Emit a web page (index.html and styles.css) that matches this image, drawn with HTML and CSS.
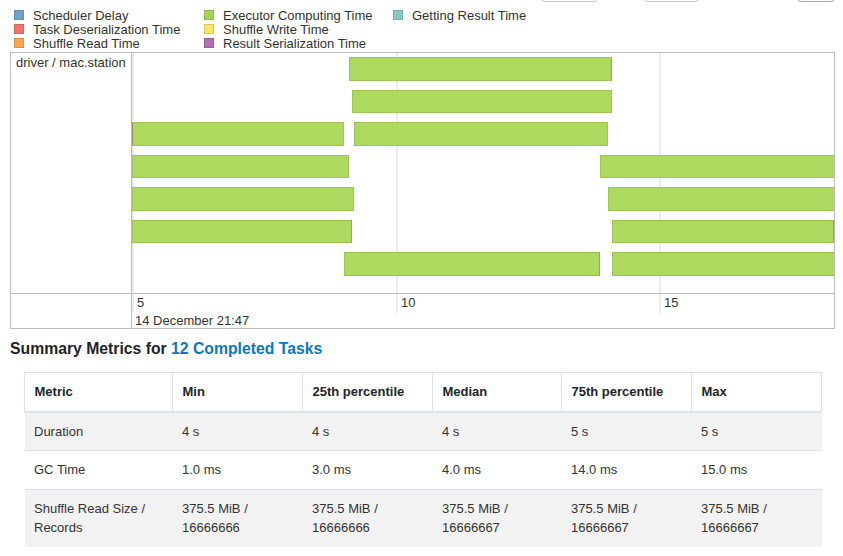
FILE: index.html
```html
<!DOCTYPE html>
<html>
<head>
<meta charset="utf-8">
<link rel="stylesheet" href="styles.css">
</head>
<body>
<div class="topbar">
  <span class="btn btn-a"></span>
  <span class="btn btn-b"></span>
  <span class="btn btn-c"></span>
</div>
<div class="legend">
  <div class="lg-item"><span class="sw sw-sched"></span>Scheduler Delay</div>
  <div class="lg-item"><span class="sw sw-exec"></span>Executor Computing Time</div>
  <div class="lg-item"><span class="sw sw-result"></span>Getting Result Time</div>
  <div class="lg-item"><span class="sw sw-deser"></span>Task Deserialization Time</div>
  <div class="lg-item"><span class="sw sw-write"></span>Shuffle Write Time</div>
  <div class="lg-item"></div>
  <div class="lg-item"><span class="sw sw-read"></span>Shuffle Read Time</div>
  <div class="lg-item"><span class="sw sw-ser"></span>Result Serialization Time</div>
</div>

<div class="timeline">
  <div class="tl-label">driver / mac.station</div>
  <div class="tl-items">
    <span class="grid-line" style="left:0px"></span>
    <span class="grid-line" style="left:264px"></span>
    <span class="grid-line" style="left:527px"></span>
    <div class="tl-rows">
      <div class="tl-row">
        <span class="bar edge-r" style="left:217px;width:263px"></span>
      </div>
      <div class="tl-row">
        <span class="bar" style="left:220px;width:260px"></span>
      </div>
      <div class="tl-row">
        <span class="bar edge-l" style="left:0px;width:212px"></span>
        <span class="bar" style="left:222px;width:254px"></span>
      </div>
      <div class="tl-row">
        <span class="bar" style="left:0px;width:217px"></span>
        <span class="bar" style="left:468px;width:236px"></span>
      </div>
      <div class="tl-row">
        <span class="bar" style="left:0px;width:222px"></span>
        <span class="bar" style="left:476px;width:228px"></span>
      </div>
      <div class="tl-row">
        <span class="bar edge-r" style="left:0px;width:220px"></span>
        <span class="bar edge-r" style="left:480px;width:222px"></span>
      </div>
      <div class="tl-row">
        <span class="bar edge-r" style="left:212px;width:256px"></span>
        <span class="bar" style="left:480px;width:224px"></span>
      </div>
    </div>
  </div>
  <div class="tl-axis-label"></div>
  <div class="tl-axis">
    <div class="ticks">
      <span class="tick" style="left:0px">5</span>
      <span class="tick" style="left:264px">10</span>
      <span class="tick" style="left:527px">15</span>
    </div>
    <div class="major">14 December 21:47</div>
  </div>
</div>

<h4 class="summary-title">Summary Metrics for <a href="#" class="link">12 Completed Tasks</a></h4>

<table class="metrics">
  <colgroup>
    <col class="c1"><col class="c2"><col class="c3"><col class="c4"><col class="c5"><col class="c6">
  </colgroup>
  <thead>
    <tr><th>Metric</th><th>Min</th><th>25th percentile</th><th>Median</th><th>75th percentile</th><th>Max</th></tr>
  </thead>
  <tbody>
    <tr class="stripe"><td>Duration</td><td>4 s</td><td>4 s</td><td>4 s</td><td>5 s</td><td>5 s</td></tr>
    <tr><td>GC Time</td><td>1.0 ms</td><td>3.0 ms</td><td>4.0 ms</td><td>14.0 ms</td><td>15.0 ms</td></tr>
    <tr class="stripe"><td>Shuffle Read Size / Records</td><td>375.5 MiB / 16666666</td><td>375.5 MiB / 16666666</td><td>375.5 MiB / 16666667</td><td>375.5 MiB / 16666667</td><td>375.5 MiB / 16666667</td></tr>
  </tbody>
</table>
</body>
</html>
```
FILE: styles.css
```css
* { box-sizing: border-box; }
body {
  margin: 0;
  background: #fff;
  font-family: "Liberation Sans", Arial, sans-serif;
  color: #333;
}
.topbar {
  height: 2px;
  overflow: hidden;
  display: flex;
  align-items: flex-end;
}
.btn {
  display: block;
  height: 8px;
  border: 1px solid #c8c8cc;
  border-radius: 4px;
}
.btn-a { margin-left: 541px; width: 57px; }
.btn-b { margin-left: 45px; width: 56px; }
.btn-c { margin-left: 98px; width: 38px; border-color: #a9a9ad; }

.legend {
  display: grid;
  grid-template-columns: 190px 189px auto;
  padding: 6.5px 0 0 14px;
  font-size: 13px;
  line-height: 14px;
  color: #333;
}
.lg-item {
  display: flex;
  align-items: center;
  height: 14px;
}
.sw {
  width: 10px;
  height: 10px;
  margin-right: 9px;
  margin-top: -1px;
  border: 1px solid rgba(0,0,0,0.12);
}
.sw-sched { background: #6fa3d0; }
.sw-deser { background: #f4756a; }
.sw-read { background: #f8a64e; }
.sw-exec { background: #a6d559; }
.sw-write { background: #f9e566; }
.sw-ser { background: #ae6fb2; }
.sw-result { background: #84cabd; }

.timeline {
  margin: 1.5px 0 0 10px;
  width: 825px;
  height: 277px;
  border: 1px solid #bdbdbd;
  display: grid;
  grid-template-columns: 121px 702px;
  grid-template-rows: 240px 35px;
  font-size: 13px;
  line-height: 14px;
  color: #333;
}
.tl-label {
  border-right: 1px solid #bdbdbd;
  padding: 2.5px 5px;
}
.tl-items {
  position: relative;
  overflow: hidden;
}
.grid-line {
  position: absolute;
  top: 0;
  bottom: 0;
  width: 2px;
  background: #ececec;
}
.tl-rows {
  position: relative;
  padding-top: 4px;
  display: flex;
  flex-direction: column;
  gap: 9px;
}
.tl-row {
  position: relative;
  height: 23.5px;
}
.bar {
  position: absolute;
  top: 0;
  height: 100%;
  background: #acd95e;
  border: 1px solid #9cc45a;
}
.bar.edge-r { border-right: 1px solid #9a9a8a; }
.bar.edge-l { border-left: 1px solid #9a8a6a; }
.tl-axis-label {
  border-right: 1px solid #bdbdbd;
  border-top: 1px solid #bdbdbd;
}
.tl-axis {
  border-top: 1px solid #bdbdbd;
  position: relative;
  padding-top: 1.5px;
}
.ticks {
  position: relative;
  height: 18px;
}
.tick {
  position: absolute;
  top: -1.5px;
  height: 19px;
  padding: 1.5px 0 0 3px;
  border-left: 2px solid #ececec;
}
.major {
  padding-left: 3px;
}

.summary-title {
  margin: 9.5px 0 14.5px 10px;
  font-size: 15.75px;
  line-height: 19px;
  font-weight: bold;
  color: #1f2328;
}
.link {
  color: #0a78c2;
  text-decoration: none;
}

.metrics {
  margin-left: 24px;
  width: 797px;
  table-layout: fixed;
  border-collapse: collapse;
  font-size: 13px;
  line-height: 19.5px;
  color: #333;
}
.c1 { width: 148px; }
.c2 { width: 130px; }
.c3 { width: 130px; }
.c4 { width: 129px; }
.c5 { width: 130px; }
.c6 { width: 130px; }
.metrics th {
  text-align: left;
  font-weight: bold;
  color: #212529;
  padding: 9px 9.5px;
  border: 1px solid #dee2e6;
  border-bottom: 2px solid #dee2e6;
  vertical-align: middle;
}
.metrics td {
  padding: 9px 9.5px;
  border-top: 1px solid #dee2e6;
  vertical-align: top;
}
.metrics tr.stripe td { background: #f2f2f2; }
```
